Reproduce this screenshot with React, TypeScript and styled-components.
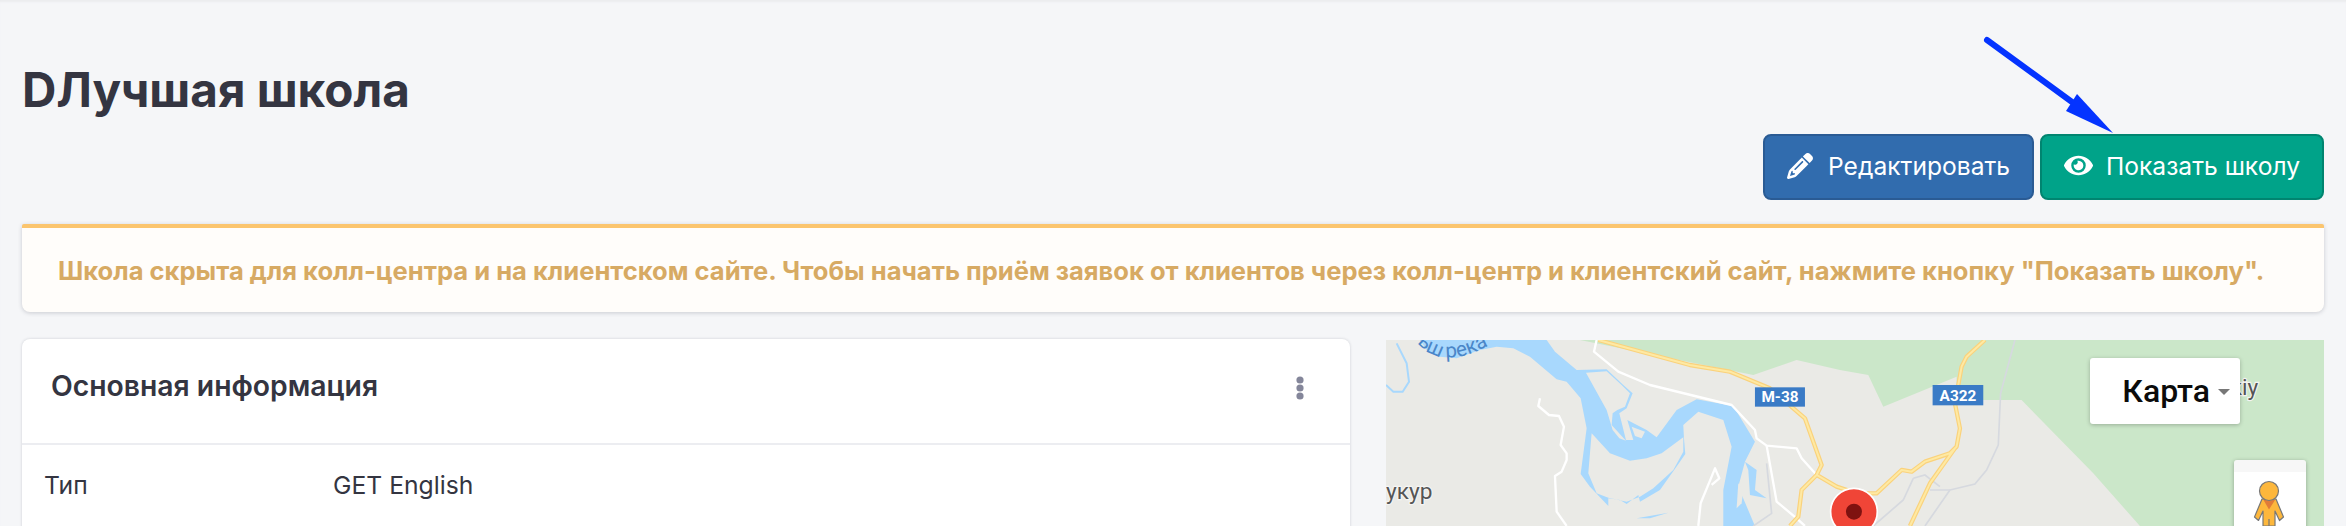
import React from 'react'
import styled, { createGlobalStyle } from 'styled-components'
import { FaEye } from 'react-icons/fa'
import { FaPencil } from 'react-icons/fa6'

const GlobalStyle = createGlobalStyle`
  html, body {
    margin: 0;
    height: 526px;
    overflow: hidden;
    background: #f5f6f8;
    font-family: Inter, "Liberation Sans", sans-serif;
    color: #343541;
  }
`

const Page = styled.div`
  position: relative;
  height: 526px;
  padding: 0 22px;
  box-sizing: border-box;
  overflow: hidden;
  box-shadow: inset 0 3px 2px -1px #ebecef;
`

const Title = styled.h1`
  margin: 0;
  padding-top: 62px;
  font-size: 47.6px;
  line-height: 56px;
  font-weight: 700;
  color: #343541;
`

const Actions = styled.div`
  display: flex;
  justify-content: flex-end;
  gap: 6px;
  margin-top: 16px;
`

const ActionButton = styled.button<{ $tone: string; $edge: string; $icon: number; $gap: number }>`
  display: flex;
  align-items: center;
  gap: ${p => p.$gap}px;
  height: 66px;
  padding: 0 22px 3px;
  box-sizing: border-box;
  border: 2px solid ${p => p.$edge};
  border-radius: 8px;
  background: ${p => p.$tone};
  color: #fff;
  font: 400 24.6px Inter, "Liberation Sans", sans-serif;

  svg {
    flex: none;
    font-size: ${p => p.$icon}px;
  }
`

const Alert = styled.div`
  display: flex;
  align-items: center;
  height: 88px;
  margin-top: 24px;
  padding: 0 36px;
  box-sizing: border-box;
  border-top: 4px solid #fbc56e;
  border-radius: 2px 2px 8px 8px;
  background: #fffdfa;
  box-shadow: 0 1px 4px rgba(50, 55, 75, 0.22);
  color: #d7aa63;
  font-size: 25.55px;
  font-weight: 700;
  white-space: nowrap;
`

const Columns = styled.div`
  display: grid;
  grid-template-columns: 1328px 938px;
  gap: 36px;
  margin-top: 27px;
`

const Card = styled.section`
  height: 240px;
  border-radius: 8px 8px 0 0;
  background: #fff;
  box-shadow: 0 0 3px rgba(50, 55, 75, 0.2);
`

const CardHead = styled.header`
  display: flex;
  align-items: center;
  justify-content: space-between;
  height: 106px;
  padding: 0 45px 11px 29px;
  box-sizing: border-box;
  border-bottom: 2px solid #ecedf1;
`

const CardTitle = styled.h2`
  margin: 0;
  font-size: 28.3px;
  font-weight: 600;
`

const MenuDots = styled.svg`
  width: 10px;
  height: 24px;
  margin-top: 4px;
  fill: #84869a;
`

const InfoRow = styled.div`
  display: grid;
  grid-template-columns: 289px 1fr;
  padding: 25px 22px;
  font-size: 24.7px;
  line-height: 30px;
`

const MapPanel = styled.div`
  position: relative;
  height: 186px;
  margin-top: 1px;
  overflow: hidden;
  background: #eaeae6;

  > svg {
    display: block;
    width: 938px;
    height: 186px;
  }
`

const MapType = styled.div`
  position: absolute;
  top: 18px;
  left: 704px;
  display: flex;
  align-items: center;
  justify-content: flex-end;
  gap: 8px;
  width: 150px;
  height: 66px;
  padding-right: 10px;
  box-sizing: border-box;
  border-radius: 3px;
  background: #fff;
  box-shadow: 0 1px 4px rgba(0, 0, 0, 0.25);
  color: #0b0b0b;
  font: 500 32px Roboto, "Liberation Sans", sans-serif;
`

const Caret = styled.span`
  width: 0;
  height: 0;
  margin-top: 2px;
  border-left: 6px solid transparent;
  border-right: 6px solid transparent;
  border-top: 6px solid #777;
`

const PegmanBox = styled.div`
  position: absolute;
  top: 120px;
  left: 848px;
  width: 72px;
  height: 80px;
  border-radius: 3px;
  background: linear-gradient(#f7f7f7 12px, #fff 12px);
  box-shadow: 0 1px 4px rgba(0, 0, 0, 0.3);

  svg {
    display: block;
    width: 72px;
    height: 66px;
  }
`

const RoadLabel = styled.text`
  fill: #fff;
  font: 700 46px Roboto, "Liberation Sans", sans-serif;
  text-anchor: middle;
`

const PlaceLabel = styled.text`
  fill: #555;
  stroke: #f4f4f2;
  stroke-width: 7px;
  paint-order: stroke;
  font: 400 68px Roboto, "Liberation Sans", sans-serif;
`

const WaterLabel = styled.text`
  fill: #4a86c8;
  font: 400 62px Roboto, "Liberation Sans", sans-serif;
`

const Pointer = styled.svg`
  position: absolute;
  top: 30px;
  left: 1975px;
  width: 150px;
  height: 110px;
`

const highways =
  'M775 30 L830 45 L1050 105 L1170 125 L1290 175 L1395 265 L1445 405 L1430 435 L1385 480 L1375 560 L1350 588 ' +
  'M1430 435 L1490 470 L1550 490 L1610 490 L1685 420 L1715 425 L1755 395 L1830 370 L1850 350 L1860 295 L1845 220 L1865 110 L1880 80 L1935 30 ' +
  'M1845 355 L1770 460 L1710 588'

const MapDrawing = () => (
  <svg viewBox="0 0 938 186">
    {/* coordinates below are in 3x map units, offset so they line up with the crop */}
    <g transform="translate(-46 -10) scale(0.3333)">
      <path fill="#cbe7c9" d="M720 30 L1240 135 L1370 90 L1500 120 L1585 135 L1630 230 L1850 140 L1850 210 L2045 210 L2260 430 L2400 588 L3000 588 L3000 30 Z" />

      <path fill="#a8d8fd" fillRule="evenodd" d="M240 30 L262 62 L300 80 L350 85 L420 60 L470 50 L520 55 L570 80 L650 148 L680 155 L722 205 L740 295 L722 432 L750 470 L805 528 L805 505 L840 510 L860 522 L895 495 L900 515 L960 480 L1020 395 L1036 372 L1032 325 L1030 285 L1075 245 L1150 270 L1175 350 L1150 480 L1150 588 L1245 588 L1195 470 L1215 395 L1245 335 L1180 228 L1070 208 L1010 240 L950 322 L920 300 L862 270 L880 330 L858 330 L838 250 L860 235 L878 190 L850 165 L800 118 L710 120 L645 65 L620 30 Z M755 310 L745 430 L770 490 L805 503 L860 515 L900 500 L940 475 L1000 420 L1030 365 L1030 322 L965 370 L920 385 L870 392 L810 370 Z" />
      <path fill="#eaeae6" d="M738 128 L800 124 L845 165 L870 190 L855 230 L832 240 L818 250 L815 285 L858 332 L838 325 L818 300 L800 240 Z" />
      <path fill="#eaeae6" d="M875 290 L915 305 L905 325 L885 318 Z" />
      <path fill="#a8d8fd" d="M890 565 L985 548 L930 565 Z M1215 395 L1250 420 L1245 480 L1280 505 L1230 495 L1225 420 Z" />
      <path fill="none" stroke="#a8d8fd" strokeWidth="6" d="M170 40 L200 100 L207 155 L188 185 L160 185 L138 165" />
      <path fill="#eaeae6" d="M1195 460 L1210 480 L1205 520 L1190 535 Z" />

      <g fill="none" stroke="#d6d9df" strokeWidth="5">
        <path d="M1280 400 L1295 550 L1240 588" />
        <path d="M2025 30 L1982 190 L1975 345 L1940 420 L1905 462 L1830 480 L1770 480" />
        <path d="M1830 480 L1755 588 M1720 445 L1755 435 L1800 470 M1720 445 L1690 510 L1600 588" />
      </g>

      <g fill="none" stroke="#fff" strokeWidth="7" strokeLinejoin="round">
        <path d="M770 30 L762 65 L835 125 L930 165 L1175 225 L1245 300 L1250 325 L1280 347 L1370 355 L1385 385 L1430 435" />
        <path d="M1280 347 L1310 515 L1370 565 L1395 588" />
        <path d="M600 205 L595 228 L627 255 L657 258 L672 290 L662 345 L680 370 L680 390 L665 425 L645 438 L650 545 L680 588" />
        <path d="M1115 465 L1138 445 L1125 415 L1115 440 L1082 520 L1075 588" />
      </g>

      <g fill="none" strokeLinejoin="round">
        <path stroke="#fad27c" strokeWidth="13" d={highways} />
        <path stroke="#fee9a3" strokeWidth="6" d={highways} />
      </g>

      <path id="riverName" fill="none" d="M232 38 C280 94 350 100 455 42" />
      <WaterLabel>
        <textPath href="#riverName">ьш река</textPath>
      </WaterLabel>

      <rect x="1245" y="172" width="150" height="58" fill="#3a7bc6" />
      <RoadLabel x="1320" y="217">М-38</RoadLabel>
      <rect x="1778" y="165" width="152" height="61" fill="#3a7bc6" />
      <RoadLabel x="1854" y="212">А322</RoadLabel>

      <PlaceLabel x="138" y="507">укур</PlaceLabel>
      <PlaceLabel x="2672" y="195">kiy</PlaceLabel>

      <circle cx="1542" cy="545" r="70" fill="#f04537" stroke="#fff" strokeWidth="5" />
      <circle cx="1542" cy="545" r="24" fill="#7f1210" />
    </g>
  </svg>
)

export default function App() {
  return (
    <>
      <GlobalStyle />
      <Page>
        <Title>DЛучшая школа</Title>
        <Actions>
          <ActionButton $tone="#316cae" $edge="#2a5b94" $icon={26} $gap={15}>
            <FaPencil />
            Редактировать
          </ActionButton>
          <ActionButton $tone="#00a389" $edge="#008570" $icon={29} $gap={13}>
            <FaEye />
            Показать школу
          </ActionButton>
        </Actions>
        <Alert>
          Школа скрыта для колл-центра и на клиентском сайте. Чтобы начать приём заявок от клиентов через колл-центр и клиентский сайт, нажмите кнопку "Показать школу".
        </Alert>
        <Columns>
          <Card>
            <CardHead>
              <CardTitle>Основная информация</CardTitle>
              <MenuDots viewBox="0 0 10 24">
                <circle cx="5" cy="4" r="3.6" />
                <circle cx="5" cy="12" r="3.6" />
                <circle cx="5" cy="20" r="3.6" />
              </MenuDots>
            </CardHead>
            <InfoRow>
              <span>Тип</span>
              <span>GET English</span>
            </InfoRow>
          </Card>
          <MapPanel>
            <MapDrawing />
            <MapType>
              Карта
              <Caret />
            </MapType>
            <PegmanBox>
              <svg viewBox="0 0 72 66">
                <path fill="#fdb73c" stroke="#777" strokeWidth="1.2" strokeLinejoin="round" d="M28 39 L42 39 L49.5 57 L45.5 60.5 L41 51 L41 66 L29 66 L29 51 L24.5 60.5 L20.5 57 Z" />
                <path fill="#e07b39" d="M29.5 40 L41 40 L35 49.5 Z" />
                <path stroke="#777" strokeWidth="1.2" d="M35 59 L35 66" />
                <circle cx="35" cy="31" r="9.5" fill="#fdb73c" stroke="#777" strokeWidth="1.2" />
              </svg>
            </PegmanBox>
          </MapPanel>
        </Columns>
        <Pointer viewBox="0 0 150 110">
          <path stroke="#0433ff" strokeWidth="6" strokeLinecap="round" d="M12 10 L97 72" />
          <path fill="#0433ff" d="M102 64 L91 81 L138 103 Z" />
        </Pointer>
      </Page>
    </>
  )
}
